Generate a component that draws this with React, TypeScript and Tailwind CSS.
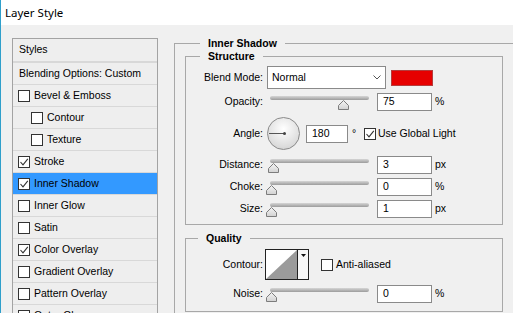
import React from "react";

const UI = "font-['Liberation_Sans',Arial,sans-serif] text-[10.5px] text-black";

function Check({ checked }: { checked?: boolean }) {
  return (
    <span className="w-[12px] h-[12px] shrink-0 border border-[#333333] bg-white flex items-center justify-center">
      {checked && (
        <svg width="10" height="10" viewBox="0 0 10 10">
          <path d="M1.5 5 L4 7.8 L8.8 1.8" stroke="#333" strokeWidth="1.1" fill="none" />
        </svg>
      )}
    </span>
  );
}

function StyleRow({
  label,
  checked,
  indent,
  active,
}: {
  label: string;
  checked?: boolean;
  indent?: boolean;
  active?: boolean;
}) {
  return (
    <div
      className={`h-[22px] flex items-center border-b border-[#d8d8d8] ${
        indent ? "pl-[18px]" : "pl-[5px]"
      } ${active ? "bg-[#3399ff]" : ""}`}
    >
      <Check checked={checked} />
      <span className="ml-[4px]">{label}</span>
    </div>
  );
}

function Slider({ pct }: { pct: number }) {
  return (
    <div className="relative w-[99px] h-[18px] shrink-0">
      <div className="mt-[5px] h-[4px] rounded-full bg-gradient-to-b from-[#d6d6d6] to-[#9c9c9c]" />
      <svg
        width="11"
        height="10"
        viewBox="0 0 11 10"
        className="absolute top-[4px]"
        style={{ left: -4 + pct * 0.96 }}
      >
        <defs>
          <linearGradient id="thumb" x1="0" y1="0" x2="0" y2="1">
            <stop offset="0" stopColor="#f4f4f4" />
            <stop offset="1" stopColor="#d2d2d2" />
          </linearGradient>
        </defs>
        <path d="M5.5 0.5 L10.5 5.5 L10.5 9.5 L0.5 9.5 L0.5 5.5 Z" fill="url(#thumb)" stroke="#7c7c7c" />
      </svg>
    </div>
  );
}

function Field({ value, w = "w-[55px]", ml = "ml-[8px]" }: { value: string; w?: string; ml?: string }) {
  return (
    <div className={`${w} ${ml} h-[18px] shrink-0 bg-white border border-[#8a8a8a] pl-[5px] flex items-center`}>
      {value}
    </div>
  );
}

function Label({ text }: { text: string }) {
  return <span className="w-[77px] shrink-0 text-right">{text}</span>;
}

function SliderRow({ label, pct, value, unit, mt }: { label: string; pct: number; value: string; unit: string; mt: string }) {
  return (
    <div className={`${mt} h-[18px] flex items-center`}>
      <Label text={label} />
      <div className="ml-[7px]">
        <Slider pct={pct} />
      </div>
      <Field value={value} />
      <span className="ml-[3px]">{unit}</span>
    </div>
  );
}

export default function App() {
  return (
    <div className={`w-[513px] h-[313px] overflow-hidden bg-[#f0f0f0] border-l border-[#2f9fcb] ${UI}`}>
      <div className="h-[25px] bg-white flex items-center pl-[4px] font-['Noto_Sans',sans-serif] text-[11.5px]">
        Layer Style
      </div>

      <div className="flex items-start">
        {/* Styles list */}
        <div className="ml-[11px] mt-[13px] w-[146px] shrink-0 border border-[#a3a3a3] bg-[#eeeeee]">
          <div className="h-[24px] flex items-center pl-[6px] border-b-2 border-[#d8d8d8]">Styles</div>
          <div className="h-[22px] flex items-center pl-[6px] border-b border-[#d8d8d8]">Blending Options: Custom</div>
          <StyleRow label="Bevel & Emboss" />
          <StyleRow label="Contour" indent />
          <StyleRow label="Texture" indent />
          <StyleRow label="Stroke" checked />
          <StyleRow label="Inner Shadow" checked active />
          <StyleRow label="Inner Glow" />
          <StyleRow label="Satin" />
          <StyleRow label="Color Overlay" checked />
          <StyleRow label="Gradient Overlay" />
          <StyleRow label="Pattern Overlay" />
          <StyleRow label="Outer Glow" />
          <StyleRow label="Drop Shadow" />
        </div>

        {/* Inner Shadow panel */}
        <fieldset className="ml-[16px] mt-[12px] w-[350px] shrink-0 border border-[#a8a8a8] pl-[10px] pb-[20px]">
          <legend className="ml-[15px] px-2 font-bold leading-[13px]">Inner Shadow</legend>

          <fieldset className="w-[318px] border border-[#a8a8a8] pb-[6px]">
            <legend className="ml-[14px] px-2 font-bold leading-[13px]">Structure</legend>

            <div className="mt-[3px] h-[23px] flex items-center">
              <Label text="Blend Mode:" />
              <div className="ml-[4px] w-[119px] h-[23px] shrink-0 bg-white border border-[#8a8a8a] flex items-center justify-between pl-[4px] pr-[4px]">
                <span>Normal</span>
                <svg width="8" height="5" viewBox="0 0 8 5">
                  <path d="M0.5 0.5 L4 4 L7.5 0.5" stroke="#555" fill="none" />
                </svg>
              </div>
              <div className="ml-[5px] w-[42px] h-[16px] bg-[#e60000] border border-[#b43c3c]" />
            </div>

            <SliderRow label="Opacity:" pct={75} value="75" unit="%" mt="mt-[4px]" />

            <div className="mt-[6px] h-[33px] flex items-center">
              <Label text="Angle:" />
              <div className="ml-[4px] w-[33px] h-[33px] shrink-0 rounded-full border border-[#8a8a8a] bg-[radial-gradient(circle_at_50%_35%,#ffffff,#dcdcdc_70%,#c4c4c4)] flex items-center">
                <div className="w-[15px] h-px bg-[#555] ml-[1px]" />
                <div className="w-[3px] h-[3px] rounded-full bg-[#444] -ml-[1px]" />
              </div>
              <Field value="180" w="w-[42px]" ml="ml-[6px]" />
              <span className="w-[16px] pl-[4px] shrink-0">°</span>
              <Check checked />
              <span className="ml-[2px]">Use Global Light</span>
            </div>

            <SliderRow label="Distance:" pct={2} value="3" unit="px" mt="mt-[6px]" />
            <SliderRow label="Choke:" pct={0} value="0" unit="%" mt="mt-[4px]" />
            <SliderRow label="Size:" pct={0} value="1" unit="px" mt="mt-[4px]" />
          </fieldset>

          <fieldset className="mt-[7px] w-[318px] border border-[#a8a8a8] pb-[8px]">
            <legend className="ml-[12px] px-2 font-bold leading-[13px]">Quality</legend>

            <div className="mt-[4px] h-[31px] flex items-center">
              <Label text="Contour:" />
              <div className="ml-[2px] w-[44px] h-[31px] shrink-0 border border-[#222] flex">
                <svg width="31" height="29" viewBox="0 0 31 29" className="shrink-0 bg-white">
                  <polygon points="0,29 31,0 31,29" fill="#9b9b9b" />
                </svg>
                <div className="flex-1 border-l border-[#222] bg-[#f7f7f7] flex justify-center pt-[4px]">
                  <svg width="5" height="3" viewBox="0 0 5 3">
                    <polygon points="0,0 5,0 2.5,3" fill="#111" />
                  </svg>
                </div>
              </div>
              <div className="ml-[12px]">
                <Check />
              </div>
              <span className="ml-[3px]">Anti-aliased</span>
            </div>

            <SliderRow label="Noise:" pct={0} value="0" unit="%" mt="mt-[5px]" />
          </fieldset>
        </fieldset>
      </div>
    </div>
  );
}
